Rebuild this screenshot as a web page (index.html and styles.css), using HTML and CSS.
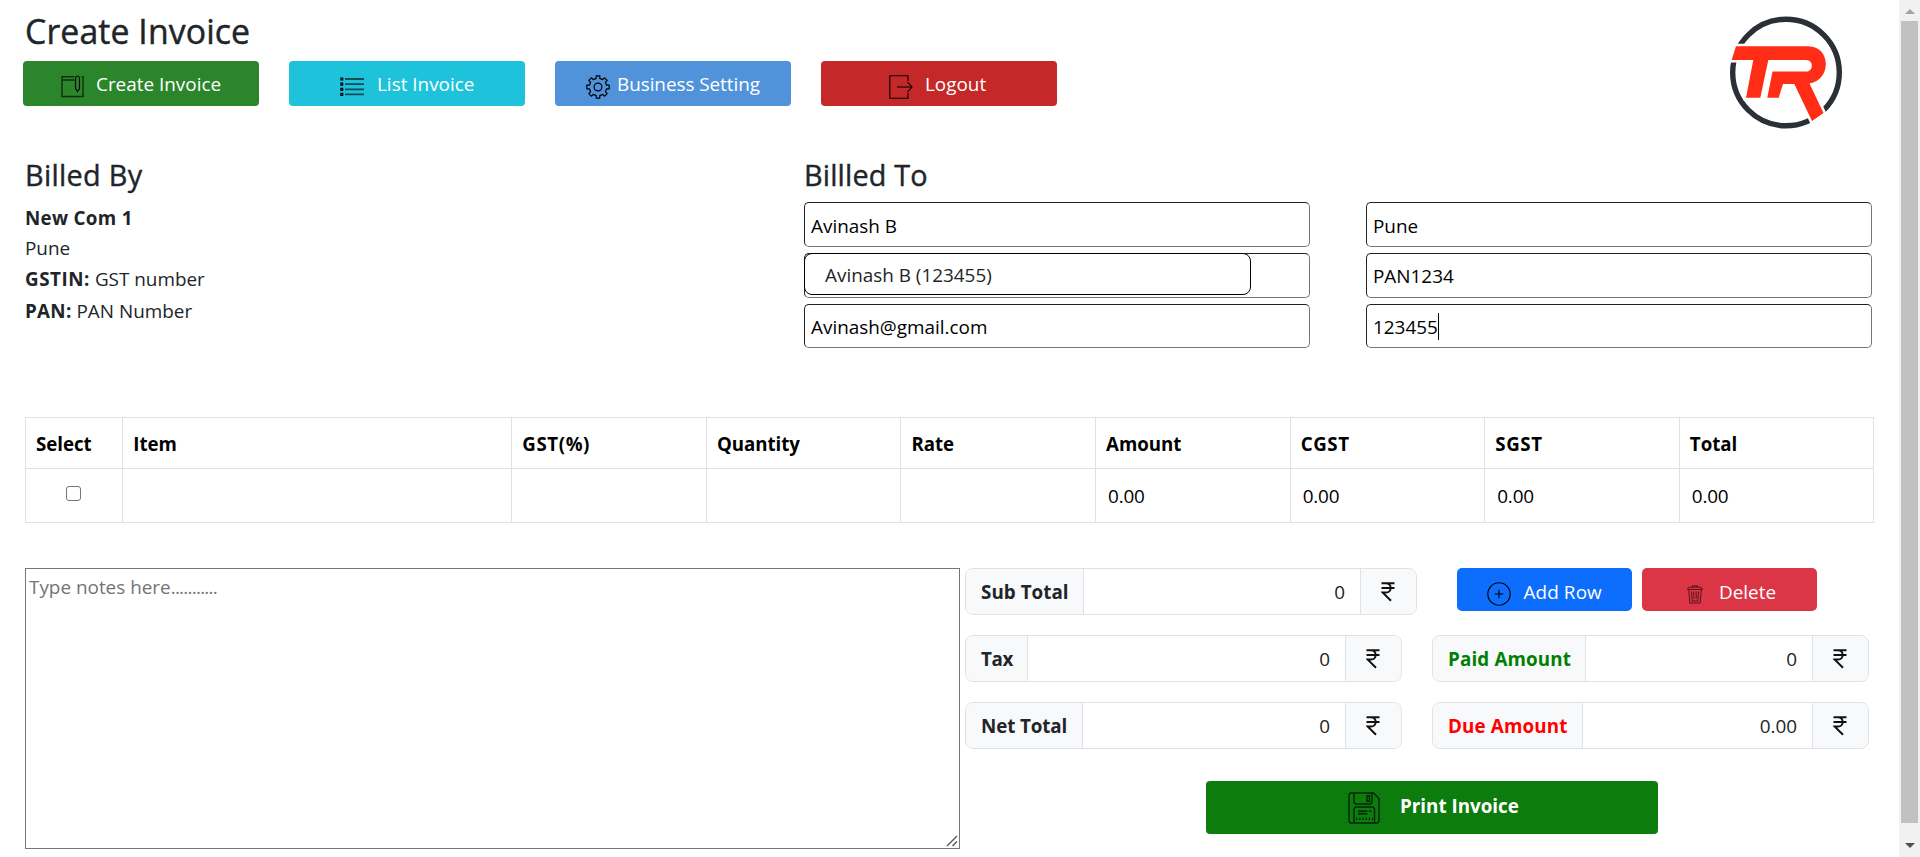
FILE: index.html
```html
<!DOCTYPE html>
<html lang="en">
<head>
<meta charset="utf-8">
<title>Create Invoice</title>
<link rel="stylesheet" href="styles.css">
</head>
<body>
<div class="page">
<main class="main">
  <header class="header">
    <div class="header-left">
      <h1 class="title">Create Invoice</h1>
      <nav class="nav">
        <a class="nav-btn create"><svg width="23" height="23" viewBox="0 0 23 23" fill="none" stroke="#000" stroke-opacity=".65" stroke-width="1.4"><path d="M13.500 1.700H1V21.500H22V1.700h-1.500M1 5h12.500"/><path stroke-opacity=".9" stroke-width="1.2" d="M14.500 4c0-4 4-4 4 0v9.500l-2 3-2-3z"/></svg><span>Create Invoice</span></a>
        <a class="nav-btn list"><svg width="24" height="23" viewBox="0 0 24 23" fill="none" stroke="#000"><path stroke-opacity=".6" stroke-width="1.8" d="M5 4h19M5 9.2h19M5 14.4h19M5 19.4h19"/><path stroke-width="3.2" d="M0.3 4h3M0.3 9.2h3M0.3 14.4h3M0.3 19.4h3"/><path stroke="#1ec3db" stroke-opacity=".6" d="M1.3 4h1M1.3 9.2h1M1.3 14.4h1M1.3 19.4h1"/></svg><span>List Invoice</span></a>
        <a class="nav-btn business"><svg width="24" height="24" viewBox="0 0 24 24" fill="none" stroke="#000" stroke-width="1.2" stroke-linejoin="round"><path d="M10.2 .8h3.6v2.6l2.9 1.2 1.9-1.8 2.6 2.6-1.8 1.9 1.2 2.9h2.6v3.6h-2.6l-1.2 2.9 1.8 1.9-2.6 2.6-1.9-1.8-2.9 1.2v2.6h-3.6v-2.6l-2.9-1.2-1.9 1.8-2.6-2.6 1.8-1.9-1.2-2.9H.8v-3.6h2.6l1.2-2.9-1.8-1.9 2.6-2.6 1.9 1.8 2.9-1.2z"/><circle cx="12" cy="12" r="3.9"/></svg><span>Business Setting</span></a>
        <a class="nav-btn logout"><svg width="24" height="24" viewBox="0 0 24 24" fill="none" stroke="#000" stroke-width="1.1"><path d="M19 6V.8H.8v22.400h18.200V18M8 12h15M18.500 7l4.500 5-4.500 5"/></svg><span>Logout</span></a>
      </nav>
    </div>
    <svg class="logo" width="116" height="116" viewBox="0 0 116 116"><circle cx="58" cy="58.500" r="53.300" fill="none" stroke="#2b2f36" stroke-width="5.400"/><path fill="#ff2d16" stroke="#fff" stroke-width="5" paint-order="stroke" d="M8 32.300H80C104 32.300 103 67 81.500 69.500L95.500 99 84 107 66.300 70H55L50.700 83.700H39.300L44.500 57.600H78C85.500 57.600 86 46 78 46H40.300L32.300 83.700H18L25.300 46H3.700z"/></svg>
  </header>

  <section class="parties">
    <div class="billed-by">
      <h2 class="subtitle">Billed By</h2>
      <p class="line"><b>New Com 1</b></p>
      <p class="line">Pune</p>
      <p class="line gap"><b class="caps">GSTIN:</b> GST number</p>
      <p class="line gap"><b>PAN:</b> PAN Number</p>
    </div>
    <div class="billed-to">
      <h2 class="subtitle">Billled To</h2>
      <div class="fields">
        <div class="field">Avinash B</div>
        <div class="field">Pune</div>
        <div class="field has-menu"><div class="suggest">Avinash B (123455)</div></div>
        <div class="field mid">PAN1234</div>
        <div class="field last">Avinash@gmail.com</div>
        <div class="field last">123455<i class="caret"></i></div>
      </div>
    </div>
  </section>

  <table class="items">
    <colgroup><col class="c1"><col class="c4"><col class="c2"><col class="c2"><col class="c2"><col class="c2"><col class="c2"><col class="c2"><col class="c2"></colgroup>
    <thead><tr><th>Select</th><th>Item</th><th class="caps">GST(%)</th><th>Quantity</th><th>Rate</th><th>Amount</th><th class="caps">CGST</th><th class="caps">SGST</th><th>Total</th></tr></thead>
    <tbody><tr><td class="pick"><span class="check"></span></td><td></td><td></td><td></td><td></td><td>0.00</td><td>0.00</td><td>0.00</td><td>0.00</td></tr></tbody>
  </table>

  <section class="bottom">
    <div class="notes"><span>Type notes here<span class="dots">...........</span></span>
      <svg class="grip" width="12" height="12" viewBox="0 0 12 12" stroke="#555" stroke-width="1.4"><path d="M1 11 11 1M6.500 11 11 6.500"/></svg>
    </div>
    <div class="totals">
      <div class="row">
        <div class="group g-sub"><span class="label l-sub">Sub Total</span><span class="value">0</span><span class="unit"><svg width="14" height="20" viewBox="0 0 14 20"><path d="M.5 1.300h13M.5 6h13M.8 1.300H5c6.200 0 6.200 9.300 0 9.300H1.800L10 18.800" fill="none" stroke="#111" stroke-width="2"/></svg></span></div>
        <div class="actions">
          <a class="act add"><svg width="24" height="24" viewBox="0 0 24 24" fill="none" stroke="#000" stroke-width="1.1"><circle cx="12" cy="12" r="11.200"/><path d="M12 7.800v8.400M7.800 12h8.400"/></svg><span>Add Row</span></a>
          <a class="act del"><svg width="16" height="19" viewBox="0 0 16 19" fill="none" stroke="#000" stroke-opacity=".6" stroke-width="1"><path d="M.6 4.500c0-2 2-2.300 4-2.300h6.800c2 0 4 .3 4 2.300zM5.500 2V.8h5V2M1.800 5l1 13h10.400l1-13M4.500 6.500l.6 9.500h5.800l.6-9.500M6.800 6.500V14M9.200 6.500V14"/></svg><span>Delete</span></a>
        </div>
      </div>
      <div class="row">
        <div class="group"><span class="label l-tax">Tax</span><span class="value">0</span><span class="unit"><svg width="14" height="20" viewBox="0 0 14 20"><path d="M.5 1.300h13M.5 6h13M.8 1.300H5c6.200 0 6.200 9.300 0 9.300H1.800L10 18.800" fill="none" stroke="#111" stroke-width="2"/></svg></span></div>
        <div class="group"><span class="label l-paid">Paid Amount</span><span class="value">0</span><span class="unit"><svg width="14" height="20" viewBox="0 0 14 20"><path d="M.5 1.300h13M.5 6h13M.8 1.300H5c6.200 0 6.200 9.300 0 9.300H1.800L10 18.800" fill="none" stroke="#111" stroke-width="2"/></svg></span></div>
      </div>
      <div class="row">
        <div class="group"><span class="label l-net">Net Total</span><span class="value">0</span><span class="unit"><svg width="14" height="20" viewBox="0 0 14 20"><path d="M.5 1.300h13M.5 6h13M.8 1.300H5c6.200 0 6.200 9.300 0 9.300H1.800L10 18.800" fill="none" stroke="#111" stroke-width="2"/></svg></span></div>
        <div class="group"><span class="label l-due">Due Amount</span><span class="value">0.00</span><span class="unit"><svg width="14" height="20" viewBox="0 0 14 20"><path d="M.5 1.300h13M.5 6h13M.8 1.300H5c6.200 0 6.200 9.300 0 9.300H1.800L10 18.800" fill="none" stroke="#111" stroke-width="2"/></svg></span></div>
      </div>
      <a class="print"><svg width="32" height="32" viewBox="0 0 32 32" fill="none" stroke="#000" stroke-opacity=".7" stroke-width="1.400"><path d="M2.500 1H25.500L31 6.500V29.500L29.500 31H2.500L1 29.500V2.500zM6 1v9.500L7.500 12H22.500L24 10.500V1M19 3.800h2.500v5.500H19zM6 31V16.500L7.500 15H25l1.500 1.500V31M10 19.200h9.500M21 19.200h2.500M10 21.800h9.500"/><path stroke-width="2.200" stroke-dasharray="1.300 1.900" d="M8 26.800h17"/></svg><span>Print Invoice</span></a>
    </div>
  </section>
</main>
<aside class="scrollbar">
  <svg width="10" height="5" viewBox="0 0 10 5"><path d="M0 5 5 0l5 5z" fill="#a3a3a3"/></svg>
  <div class="thumb"></div>
  <svg width="10" height="5" viewBox="0 0 10 5"><path d="M0 0h10L5 5z" fill="#505050"/></svg>
</aside>
</div>
</body>
</html>
```
FILE: styles.css
```css
* { box-sizing: border-box; }
body { margin: 0; background: #fff; color: #212529; font: 18.9px/30px "Open Sans", "Noto Sans", sans-serif; overflow: hidden; }
h1, h2, p { margin: 0; }
b { font-size: 18.8px; font-weight: 700; letter-spacing: 0.3px; }
b.caps { letter-spacing: 0.55px; }
.page { display: flex; height: 857px; }
.main { flex: 1; padding: 10px 25px 0; }

.header { display: flex; justify-content: space-between; height: 147px; }
.title { font-size: 33.8px; line-height: 42px; font-weight: 500; margin-bottom: 9px; letter-spacing: 0.1px; -webkit-text-stroke: 0.45px #212529; }
.nav { display: flex; gap: 30px; margin-left: -2px; }
.nav-btn { display: flex; align-items: flex-start; width: 236px; height: 45px; padding: 8px 0 0 38px; border-radius: 4px; color: #fff; line-height: 30px; white-space: nowrap; }
.nav-btn svg { flex: none; margin-top: 6px; }
.create { background: #2b862b; }
.create span { margin-left: 12px; }
.list { background: #1ec3db; padding-left: 51px; }
.list span { margin-left: 13px; }
.business { background: #5093db; padding-left: 31px; letter-spacing: -0.05px; }
.business span { margin-left: 7px; }
.logout { background: #c42829; padding-left: 68px; }
.logout span { margin-left: 12px; }
.logo { margin: 4px 30px 0 0; }

.parties { display: flex; height: 260px; }
.billed-by { width: 779px; }
.subtitle { font-size: 28.8px; line-height: 36px; font-weight: 500; letter-spacing: 0.15px; margin-bottom: 9px; -webkit-text-stroke: 0.4px #212529; }
.billed-by .subtitle { margin-bottom: 10px; letter-spacing: 0.3px; }
.line.gap { margin-top: 1.4px; }
.fields { display: grid; grid-template-columns: 506px 506px; column-gap: 56px; row-gap: 6px; grid-template-rows: 45px 45px 44px; }
.field { position: relative; border: 1px solid; border-color: #222 #767676 #767676 #222; border-radius: 5px; padding: 8px 0 0 6px; color: #000; white-space: nowrap; }
.mid, .last { padding-top: 7px; }
.suggest { position: absolute; left: -1px; top: -1px; width: 447px; height: 42px; border: 1px solid #000; border-radius: 8px; background: #fff; color: #212529; padding: 6px 0 0 20px; }
.caret { display: inline-block; width: 1px; height: 27px; background: #000; vertical-align: -6px; }

.items { width: 1849px; border-collapse: collapse; table-layout: fixed; color: #000; }
.c1 { width: 97.3px; }
.c2 { width: 194.6px; }
.c4 { width: 389px; }
.items th, .items td { border: 1px solid #dee2e6; text-align: left; padding: 0 10px; }
.items th { height: 51px; padding-top: 1px; font-size: 18.7px; font-weight: 700; letter-spacing: -0.05px; }
.items th.caps { letter-spacing: 0.6px; }
.items td { height: 54px; padding: 0 12px; letter-spacing: -0.2px; }
.items .pick { text-align: center; padding: 0 2px 0 0; line-height: 0; }
.check { display: inline-block; width: 15px; height: 15px; border: 1px solid #767676; border-radius: 3px; margin-bottom: 4px; }

.bottom { display: flex; gap: 5px; margin-top: 45px; }
.notes { position: relative; width: 935px; height: 281px; border: 1px solid #767676; color: #757575; padding: 3px 3px; }
.dots { letter-spacing: -0.75px; }
.grip { position: absolute; right: 1px; bottom: 1px; }
.totals { width: 904px; }
.row { display: flex; justify-content: space-between; height: 67px; }
.group { display: flex; width: 437px; height: 47px; border: 1px solid #dee2e6; border-radius: 8px; overflow: hidden; line-height: 46px; }
.g-sub { width: 452px; }
.label { flex: none; background: #f8f9fa; border-right: 1px solid #dee2e6; padding-left: 15px; font-size: 18.8px; font-weight: 700; letter-spacing: -0.1px; white-space: nowrap; }
.l-sub { width: 118px; letter-spacing: 0.05px; }
.l-tax { width: 62px; letter-spacing: -0.3px; }
.l-net { width: 117px; }
.l-paid { width: 153px; color: green; letter-spacing: 0.15px; }
.l-due { width: 150px; color: red; letter-spacing: 0.15px; }
.value { flex: 1; text-align: right; padding-right: 15px; }
.unit { width: 56px; background: #f8f9fa; border-left: 1px solid #dee2e6; display: flex; align-items: flex-start; padding: 13px 0 0 20px; }
.actions { display: flex; gap: 10px; margin-right: 52px; }
.act { display: flex; align-items: flex-start; width: 175px; height: 43px; border-radius: 5px; color: #fff; padding: 9px 0 0 30px; white-space: nowrap; }
.add { background: #0d6efd; letter-spacing: 0.1px; }
.add svg { margin-top: 5px; margin-left: -0.5px; }
.add span { margin-left: 13px; }
.del { background: #dc3545; padding-left: 45px; }
.del svg { margin-top: 8px; }
.del span { margin-left: 16px; }
.print { display: flex; align-items: flex-start; width: 452px; height: 53px; margin: 12px 0 0 241px; padding: 10px 0 0 142px; border-radius: 4px; background: #0c7c0c; color: #fff; font-weight: 700; font-size: 18.8px; letter-spacing: 0; }
.print svg { margin-top: 1px; }
.print span { margin-left: 20px; }

.scrollbar { width: 21px; background: #f1f1f1; display: flex; flex-direction: column; align-items: center; padding-top: 9px; }
.thumb { width: 17px; height: 802px; margin: 7px 0 20px; background: #c1c1c1; }
```
